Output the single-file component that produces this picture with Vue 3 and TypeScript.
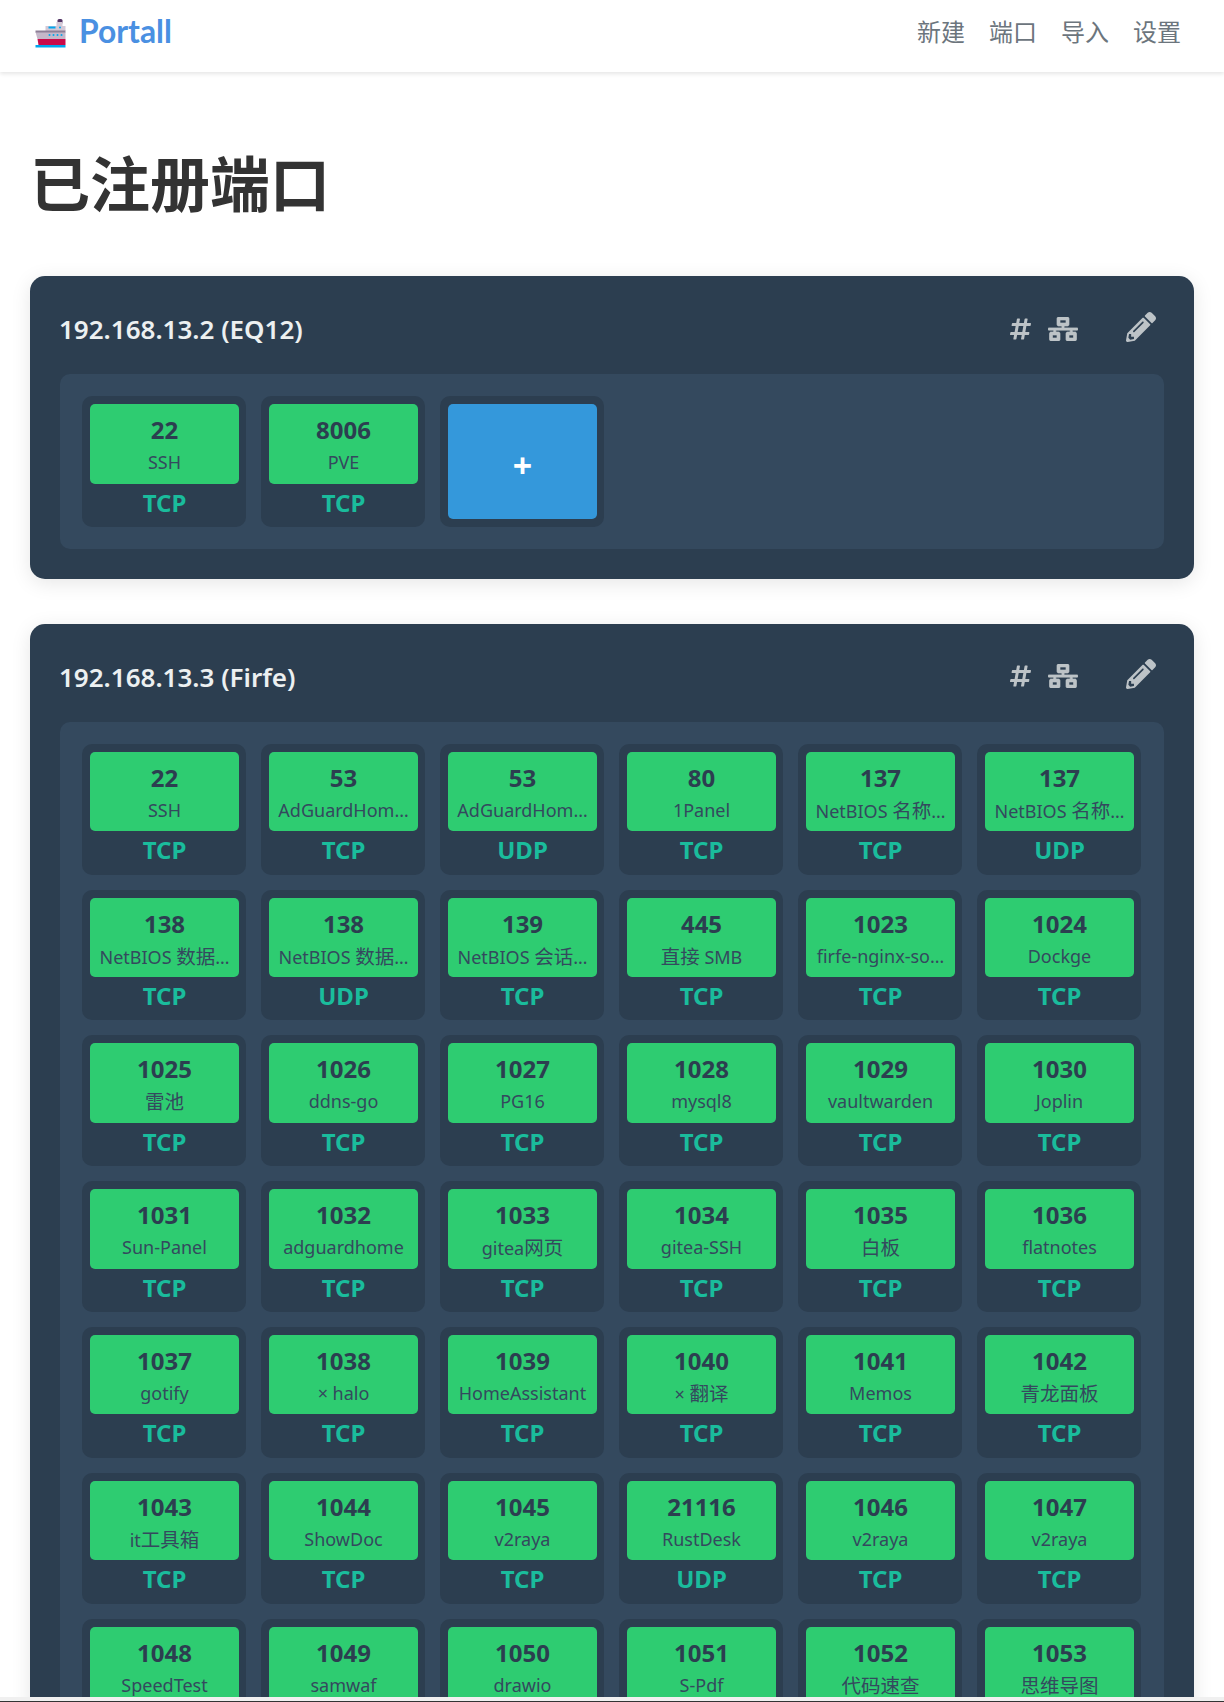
<script setup lang="ts">
interface Port { n: string; name: string; proto: string }
const p = (n: string, name: string, proto = 'TCP'): Port => ({ n, name, proto })
const first: Port[] = [p('22', 'SSH'), p('8006', 'PVE')]
const second: Port[] = [
  p('22', 'SSH'), p('53', 'AdGuardHom…'), p('53', 'AdGuardHom…', 'UDP'), p('80', '1Panel'), p('137', 'NetBIOS 名称…'), p('137', 'NetBIOS 名称…', 'UDP'),
  p('138', 'NetBIOS 数据…'), p('138', 'NetBIOS 数据…', 'UDP'), p('139', 'NetBIOS 会话…'), p('445', '直接 SMB'), p('1023', 'firfe-nginx-so…'), p('1024', 'Dockge'),
  p('1025', '雷池'), p('1026', 'ddns-go'), p('1027', 'PG16'), p('1028', 'mysql8'), p('1029', 'vaultwarden'), p('1030', 'Joplin'),
  p('1031', 'Sun-Panel'), p('1032', 'adguardhome'), p('1033', 'gitea网页'), p('1034', 'gitea-SSH'), p('1035', '白板'), p('1036', 'flatnotes'),
  p('1037', 'gotify'), p('1038', '× halo'), p('1039', 'HomeAssistant'), p('1040', '× 翻译'), p('1041', 'Memos'), p('1042', '青龙面板'),
  p('1043', 'it工具箱'), p('1044', 'ShowDoc'), p('1045', 'v2raya'), p('21116', 'RustDesk', 'UDP'), p('1046', 'v2raya'), p('1047', 'v2raya'),
  p('1048', 'SpeedTest'), p('1049', 'samwaf'), p('1050', 'drawio'), p('1051', 'S-Pdf'), p('1052', '代码速查'), p('1053', '思维导图')
]
const hosts = [
  { title: '192.168.13.2 (EQ12)', ports: first, add: true },
  { title: '192.168.13.3 (Firfe)', ports: second, add: false }
]
const nav = ['新建', '端口', '导入', '设置']
const runs = (s: string): { text: string; cjk: boolean }[] =>
  (s.match(/[\u4e00-\u9fff]+|[^\u4e00-\u9fff]+/g) ?? []).map((text) => ({ text, cjk: /[\u4e00-\u9fff]/.test(text) }))
</script>

<template>
  <div class="page">
    <header class="topbar">
      <div class="brand">
        <svg class="ship" viewBox="0 0 30 29" aria-hidden="true">
          <rect x="22" y="0" width="5" height="5" rx="1.5" fill="#533566" />
          <path d="M21 3h6v4h3v5H10V7h11z" fill="#d3c8d6" />
          <rect x="13" y="7.5" width="7" height="2" fill="#00a6ed" />
          <circle cx="24.5" cy="8.5" r="1" fill="#00a6ed" />
          <path d="M0 13h30v7H2z" fill="#c4b8c9" />
          <path d="M0 11.5h30v2H0z" fill="#8d7f96" />
          <circle cx="14" cy="16" r="1" fill="#00a6ed" />
          <circle cx="18" cy="16" r="1" fill="#00a6ed" />
          <circle cx="22" cy="16" r="1" fill="#00a6ed" />
          <circle cx="26" cy="16" r="1" fill="#00a6ed" />
          <path d="M2 20h28v6H3z" fill="#ca0b4a" />
          <path d="M0 26h30v2.5H0z" fill="#00a6ed" />
        </svg>
        <span class="brand-name">Portall</span>
      </div>
      <nav class="nav">
        <a v-for="item in nav" :key="item" class="nav-link">{{ item }}</a>
      </nav>
    </header>

    <main class="main">
      <h1 class="title">已注册端口</h1>
      <section v-for="host in hosts" :key="host.title" class="host">
        <div class="host-head">
          <h2 class="host-title">{{ host.title }}</h2>
          <div class="host-actions">
            <svg class="ic ic-hash" viewBox="0 0 448 512"><path d="M440.667 182.109l7.143-40c1.313-7.355-4.342-14.109-11.813-14.109h-74.81l14.623-81.891C377.123 38.754 371.468 32 363.997 32h-40.632a12 12 0 0 0-11.813 9.891L296.175 128H197.54l14.623-81.891C213.477 38.754 207.822 32 200.35 32h-40.632a12 12 0 0 0-11.813 9.891L132.528 128H53.432a12 12 0 0 0-11.813 9.891l-7.143 40C33.163 185.246 38.818 192 46.289 192h74.81L98.242 320H19.146a12 12 0 0 0-11.813 9.891l-7.143 40C-1.123 377.246 4.532 384 12.003 384h74.81L72.19 465.891C70.877 473.246 76.532 480 84.003 480h40.632a12 12 0 0 0 11.813-9.891L151.826 384h98.634l-14.623 81.891C234.523 473.246 240.178 480 247.65 480h40.632a12 12 0 0 0 11.813-9.891L315.472 384h79.096a12 12 0 0 0 11.813-9.891l7.143-40c1.313-7.355-4.342-14.109-11.813-14.109h-74.81l22.857-128h79.096a12 12 0 0 0 11.813-9.891zM261.889 320h-98.634l22.857-128h98.634l-22.857 128z" /></svg>
            <svg class="ic ic-net" viewBox="0 0 640 512"><path d="M640 264v-16c0-8.84-7.16-16-16-16H344v-40h72c17.67 0 32-14.33 32-32V32c0-17.67-14.33-32-32-32H224c-17.67 0-32 14.33-32 32v128c0 17.67 14.33 32 32 32h72v40H16c-8.84 0-16 7.16-16 16v16c0 8.84 7.16 16 16 16h104v40H64c-17.67 0-32 14.33-32 32v128c0 17.67 14.33 32 32 32h160c17.67 0 32-14.33 32-32V352c0-17.67-14.33-32-32-32h-56v-40h304v40h-56c-17.67 0-32 14.33-32 32v128c0 17.67 14.33 32 32 32h160c17.67 0 32-14.33 32-32V352c0-17.67-14.33-32-32-32h-56v-40h104c8.84 0 16-7.16 16-16zM256 128V64h128v64H256zm-64 320H96v-64h96v64zm352 0h-96v-64h96v64z" /></svg>
            <svg class="ic ic-pen" viewBox="0 0 512 512"><path d="M497.9 142.1l-46.1 46.1c-4.7 4.7-12.3 4.7-17 0l-111-111c-4.7-4.7-4.7-12.3 0-17l46.1-46.1c18.7-18.7 49.1-18.7 67.9 0l60.1 60.1c18.8 18.7 18.8 49.1 0 67.9zM284.2 99.8L21.6 362.4.4 483.9c-2.9 16.4 11.4 30.6 27.8 27.8l121.5-21.3 262.6-262.6c4.7-4.7 4.7-12.3 0-17l-111-111c-4.8-4.7-12.4-4.7-17.1 0zM124.1 339.9c-5.5-5.5-5.5-14.3 0-19.8l154-154c5.5-5.5 14.3-5.5 19.8 0s5.5 14.3 0 19.8l-154 154c-5.5 5.5-14.3 5.5-19.8 0zM88 424h48v36.3l-64.5 11.3-31.1-31.1L51.7 376H88v48z" /></svg>
          </div>
        </div>
        <div class="ports">
          <div v-for="(port, i) in host.ports" :key="i" class="port">
            <div class="port-face">
              <div class="port-num">{{ port.n }}</div>
              <div class="port-name"><span v-for="(r, j) in runs(port.name)" :key="j" :class="{ cjk: r.cjk }">{{ r.text }}</span></div>
            </div>
            <div class="port-proto">{{ port.proto }}</div>
          </div>
          <div v-if="host.add" class="port port-add">
            <div class="add-face">+</div>
          </div>
        </div>
      </section>
    </main>
    <div class="window-edge"></div>
  </div>
</template>

<style>
html, body { margin: 0; background: #fff; overflow: hidden; }
</style>

<style scoped>
.page {
  height: 1702px;
  overflow: hidden;
  background: #fff;
  font-family: "Noto Sans", "Noto Sans CJK SC", sans-serif;
}
.topbar {
  height: 72px;
  box-sizing: border-box;
  padding: 0 35px 10px;
  display: flex;
  align-items: center;
  justify-content: space-between;
  background: #fff;
  box-shadow: 0 2px 4px rgba(0, 0, 0, 0.1);
}
.brand { display: flex; align-items: center; gap: 13px; }
.ship { width: 31px; height: 29px; margin-top: 4px; }
.brand-name {
  font-family: Lato, "Noto Sans", sans-serif;
  font-size: 31.8px;
  font-weight: 700;
  color: #4a90e2;
  line-height: 40px;
}
.nav { display: flex; gap: 24px; margin-right: 8px; }
.nav-link {
  font-family: "Noto Sans CJK SC", sans-serif;
  font-size: 24px;
  line-height: 36px;
  color: #6c757d;
}
.main { padding: 0 30px; }
.title {
  margin: 0;
  padding-top: 64px;
  height: 204px;
  box-sizing: border-box;
  font-family: "Noto Sans CJK SC", sans-serif;
  font-size: 60px;
  font-weight: 700;
  line-height: 90px;
  color: #333;
}
.host {
  background: #2c3e50;
  border-radius: 15px;
  padding: 30px;
  margin-bottom: 45px;
  box-shadow: 0 4px 20px rgba(0, 0, 0, 0.1);
}
.host-head {
  height: 38px;
  margin-bottom: 30px;
  display: flex;
  align-items: center;
  justify-content: space-between;
}
.host-title {
  margin: 8px 0 0 -1px;
  font-family: "Noto Sans", sans-serif;
  font-size: 26px;
  font-weight: 600;
  line-height: 48px;
  color: #ecf0f1;
}
.host-actions { display: flex; align-items: center; margin-right: 8px; margin-top: 7px; }
.ic { display: block; fill: #bdc3c7; }
.ic-hash { width: 21px; height: 24px; margin-right: 17px; }
.ic-net { width: 30px; height: 24px; margin-right: 48px; stroke: #bdc3c7; stroke-width: 14; }
.ic-pen { width: 30px; height: 30px; margin-top: -4px; }
.ports {
  background: #34495e;
  border-radius: 10px;
  padding: 22px;
  display: grid;
  grid-template-columns: repeat(6, 164px);
  gap: 15px;
}
.port {
  background: #2c3e50;
  border-radius: 10px;
  padding: 8px 7px 8px 8px;
  height: 130.8px;
  box-sizing: border-box;
}
.port-face {
  background: #2ecc71;
  border-radius: 5px;
  padding: 8px;
  height: 79.5px;
  box-sizing: border-box;
  text-align: center;
}
.port-num {
  font-size: 24px;
  font-weight: 700;
  line-height: 36px;
  color: #2c3e50;
}
.port-name {
  font-size: 18px;
  line-height: 27px;
  height: 27px;
  margin-top: 1px;
  color: #34495e;
  white-space: nowrap;
}
.cjk { font-size: 19.5px; line-height: 27px; }
.port-proto {
  font-size: 24px;
  font-weight: 700;
  line-height: 36px;
  margin-top: 1px;
  text-align: center;
  color: #1abc9c;
}
.add-face {
  background: #3498db;
  border-radius: 5px;
  height: 115px;
  display: flex;
  align-items: center;
  justify-content: center;
  padding-top: 6px;
  box-sizing: border-box;
  font-size: 34px;
  font-weight: 700;
  color: #fff;
}
.window-edge {
  position: fixed;
  left: 0;
  right: 0;
  bottom: 0;
  height: 5px;
  box-sizing: border-box;
  background: #f0f0f0;
  border-bottom: 1px solid #333;
}
</style>
